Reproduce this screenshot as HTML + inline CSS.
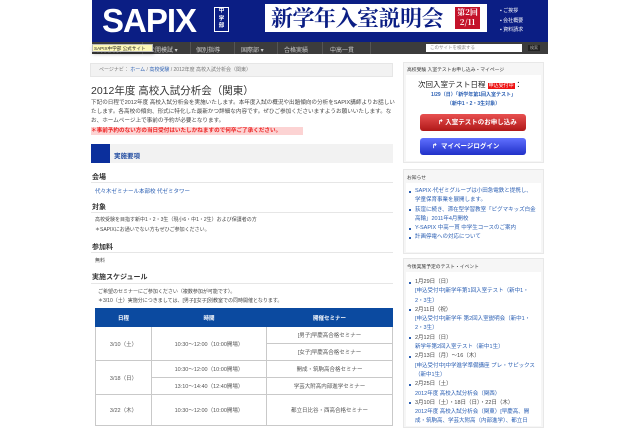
<!DOCTYPE html>
<html><head><meta charset="utf-8"><style>
*{margin:0;padding:0;box-sizing:border-box}
body{width:640px;height:426px;overflow:hidden;background:#fff;font-family:"Liberation Sans","Noto Sans CJK JP",sans-serif;color:#444;font-size:6px;position:relative}
.a{position:absolute}
#hd{left:92px;top:0;width:456px;height:42px;background:#0b1e84}
#nav{left:92px;top:42px;width:456px;height:12px;background:#3c3c3c;color:#ccc;font-size:6px}
#nav span{position:absolute;top:3px}
.sep{position:absolute;top:0;width:1px;height:12px;background:#555}
.bc{background:#f2f2f2;border:1px solid #e6e6e6}
.h3{font-size:7px;font-weight:bold;color:#333}
.ln{height:1px;background:#e6e6e6}
.link{color:#2b5fb3}
table{border-collapse:collapse;position:absolute;left:95px;top:308px;width:298px;font-size:5.5px;text-align:center;color:#555}
td,th{border:1px solid #c9c9c9}
th{background:#0b4aa0;color:#fff;height:18px;border-color:#0b4aa0}
.box{background:#f6f6f6;border:1px solid #e8e8e8}
.sb li{list-style:none;padding-left:6px;position:relative;line-height:9.3px}
.sb li:before{content:"";position:absolute;left:0;top:3.5px;width:2px;height:2px;background:#2b5fb3}
</style></head><body>
<div id="hd" class="a">
 <div class="a" style="left:10px;top:6px;color:#fff;font:bold 33px/30px 'Liberation Sans',sans-serif;letter-spacing:-1px;width:112px;overflow:hidden;white-space:nowrap">SAPIX</div>
 <div class="a" style="left:122px;top:7px;width:15px;height:25px;background:#fff;padding:1px"><div style="background:#0b1e84;height:23px;color:#fff;font-size:5.5px;line-height:7.5px;text-align:center;font-weight:bold">中<br>学<br>部</div></div>
 <div class="a" style="left:173px;top:4px;width:222px;height:28px;background:#fff;color:#0b1e84;font:bold 22px/28px 'Noto Serif CJK SC',serif;padding-left:6px;letter-spacing:-0.5px">新学年入室説明会</div>
 <div class="a" style="left:363px;top:7px;width:25px;height:22px;background:#c4122a;color:#fff;font:bold 8px/10px 'Noto Serif CJK SC',serif;text-align:center;padding-top:1px">第2回<br>2/11</div>
 <div class="a" style="left:408px;top:7px;color:#fff;font-size:5px;line-height:9.5px">▪ ご挨拶<br>▪ 会社概要<br>▪ 資料請求</div>
</div>
<div id="nav" class="a">
 <span style="left:5px">高校受験 ▾</span><div class="sep" style="left:50px"></div>
 <span style="left:57px">公開模試 ▾</span><div class="sep" style="left:98px"></div>
 <span style="left:104px">個別指導</span><div class="sep" style="left:142px"></div>
 <span style="left:149px">国際部 ▾</span><div class="sep" style="left:185px"></div>
 <span style="left:192px">合格実績</span><div class="sep" style="left:230px"></div>
 <span style="left:238px">中高一貫</span><div class="sep" style="left:278px"></div>
 <div class="a" style="left:334px;top:2px;width:96px;height:8px;background:#fff;color:#888;font-size:4.5px;line-height:8px;padding-left:4px">このサイトを検索する</div>
 <div class="a" style="left:436px;top:3px;width:12px;height:6px;background:#222;color:#aaa;font-size:4px;line-height:6px;text-align:center">検索</div>
</div>
<div class="a" style="left:92px;top:44px;width:61px;height:8px;background:#fdf8b6;border:1px solid #bbb;color:#222;font-size:4.6px;line-height:7px;padding-left:1px;box-shadow:1px 2px 3px rgba(0,0,0,.3)">SAPIX中学部 公式サイト</div>

<div class="a bc" style="left:90px;top:63px;width:303px;height:14px;color:#777;font-size:5px;line-height:13px;padding-left:8px">ページナビ： <span class="link">ホーム</span> / <span class="link">高校受験</span> / 2012年度 高校入試分析会（関東）</div>
<div class="a" style="left:91px;top:83px;font-size:10.5px;color:#333">2012年度 高校入試分析会（関東）</div>
<div class="a" style="left:91px;top:99px;width:305px;font-size:5.6px;line-height:9px;color:#444">下記の日程で2012年度 高校入試分析会を実施いたします。本年度入試の概況や出題傾向の分析をSAPIX講師よりお話しいたします。各高校の傾向、形式に特化した最新かつ詳細な内容です。ぜひご参加くださいますようお願いいたします。なお、ホームページ上で事前の予約が必要となります。</div>
<div class="a" style="left:91px;top:127px;width:212px;height:8px;background:#fcd3d3;color:#e22;font-size:5.6px;line-height:8px;font-weight:bold">＊事前予約のない方の当日受付はいたしかねますので何卒ご了承ください。</div>
<div class="a" style="left:91px;top:144px;width:302px;height:19px;background:#f2f2f2"></div>
<div class="a" style="left:91px;top:144px;width:19px;height:19px;background:#0b2f9c"></div>
<div class="a" style="left:114px;top:150px;color:#1f4aa0;font-size:6.5px;font-weight:bold">実施要項</div>

<div class="a h3" style="left:92px;top:172px">会場</div><div class="a ln" style="left:91px;top:182px;width:302px"></div>
<div class="a link" style="left:95px;top:187px;font-size:5.5px">代々木ゼミナール本部校 代ゼミタワー</div>
<div class="a h3" style="left:92px;top:202px">対象</div><div class="a ln" style="left:91px;top:212px;width:302px"></div>
<div class="a" style="left:95px;top:216px;font-size:5px;line-height:9.5px">高校受験を目指す新中1・2・3生（現小6・中1・2生）および保護者の方<br>＊SAPIXにお通いでない方もぜひご参加ください。</div>
<div class="a h3" style="left:92px;top:242px">参加料</div><div class="a ln" style="left:91px;top:252px;width:302px"></div>
<div class="a" style="left:95px;top:257px;font-size:5px">無料</div>
<div class="a h3" style="left:92px;top:272px">実施スケジュール</div><div class="a ln" style="left:91px;top:283px;width:302px"></div>
<div class="a" style="left:98px;top:288px;font-size:5px;line-height:9px">ご希望のセミナーにご参加ください（複数参加が可能です）。<br>＊3/10（土）実施分につきましては、[男子][女子]別教室での同時開催となります。</div>
<table>
<tr><th style="width:56px">日程</th><th style="width:115px">時間</th><th>開催セミナー</th></tr>
<tr style="height:17px"><td rowspan="2">3/10（土）</td><td rowspan="2">10:30〜12:00（10:00開場）</td><td>[男子]早慶高合格セミナー</td></tr>
<tr style="height:17px"><td>[女子]早慶高合格セミナー</td></tr>
<tr style="height:17px"><td rowspan="2">3/18（日）</td><td>10:30〜12:00（10:00開場）</td><td>開成・筑駒高合格セミナー</td></tr>
<tr style="height:17px"><td>13:10〜14:40（12:40開場）</td><td>学芸大附高内部進学セミナー</td></tr>
<tr style="height:31px"><td>3/22（木）</td><td>10:30〜12:00（10:00開場）</td><td>都立日比谷・西高合格セミナー</td></tr>
</table>

<div class="a box" style="left:403px;top:62px;width:141px;height:101px"></div>
<div class="a" style="left:407px;top:66px;font-size:4.8px;color:#333">高校受験 入室テストお申し込み・マイページ</div>
<div class="a" style="left:406px;top:75px;width:135px;height:86px;background:#fff"></div>
<div class="a" style="left:418px;top:79px;font-size:7.5px;color:#222">次回入室テスト日程 <span style="background:#e11;color:#fff;font-size:5px;padding:0 1px">申込受付中</span>：</div>
<div class="a link" style="left:403px;top:91px;width:141px;text-align:center;font-size:5px;line-height:9px;font-weight:bold">1/29（日）「新学年第1回入室テスト」<br>（新中1・2・3生対象）</div>
<div class="a" style="left:420px;top:114px;width:106px;height:17px;border-radius:3px;background:linear-gradient(#e85050,#b01818);color:#fff;font-size:6.5px;line-height:17px;padding-left:18px;font-weight:bold">↱ 入室テストのお申し込み</div>
<div class="a" style="left:420px;top:138px;width:106px;height:17px;border-radius:3px;background:linear-gradient(#6070ff,#2030c8);color:#fff;font-size:6.5px;line-height:17px;padding-left:12px;font-weight:bold">↱ &nbsp;マイページログイン</div>

<div class="a box" style="left:403px;top:169px;width:141px;height:85px"></div>
<div class="a" style="left:407px;top:174px;font-size:4.8px;color:#333">お知らせ</div>
<div class="a" style="left:406px;top:183px;width:135px;height:69px;background:#fff"></div>
<ul class="a sb link" style="left:409px;top:187px;width:128px;font-size:5.5px">
<li>SAPIX·代ゼミグループは小田急電鉄と提携し、学童保育事業を展開します。</li>
<li>荻窪に続き、滞在型学習教室「ピグマキッズ白金高輪」2011年4月開校</li>
<li>Y-SAPIX 中高一貫 中学生コースのご案内</li>
<li>計画停電への対応について</li></ul>

<div class="a box" style="left:403px;top:258px;width:141px;height:170px"></div>
<div class="a" style="left:407px;top:263px;font-size:4.8px;color:#333">今後実施予定のテスト・イベント</div>
<div class="a" style="left:406px;top:272px;width:135px;height:154px;background:#fff"></div>
<ul class="a sb" style="left:409px;top:278px;width:128px;font-size:5.5px;color:#444">
<li>1月29日（日）<br><span class="link">[申込受付中]新学年第1回入室テスト（新中1・2・3生）</span></li>
<li>2月11日（祝）<br><span class="link">[申込受付中]新学年 第2回入室説明会（新中1・2・3生）</span></li>
<li>2月12日（日）<br><span class="link">新学年第2回入室テスト（新中1生）</span></li>
<li>2月13日（月）〜16（木）<br><span class="link">[申込受付中]中学進学準備講座 プレ・サピックス（新中1生）</span></li>
<li>2月25日（土）<br><span class="link">2012年度 高校入試分析会（関西）</span></li>
<li>3月10日（土）・18日（日）・22日（木）<br><span class="link">2012年度 高校入試分析会（関東）[早慶高、開成・筑駒高、学芸大附高（内部進学）、都立日</span></li>
</ul>
</body></html>
